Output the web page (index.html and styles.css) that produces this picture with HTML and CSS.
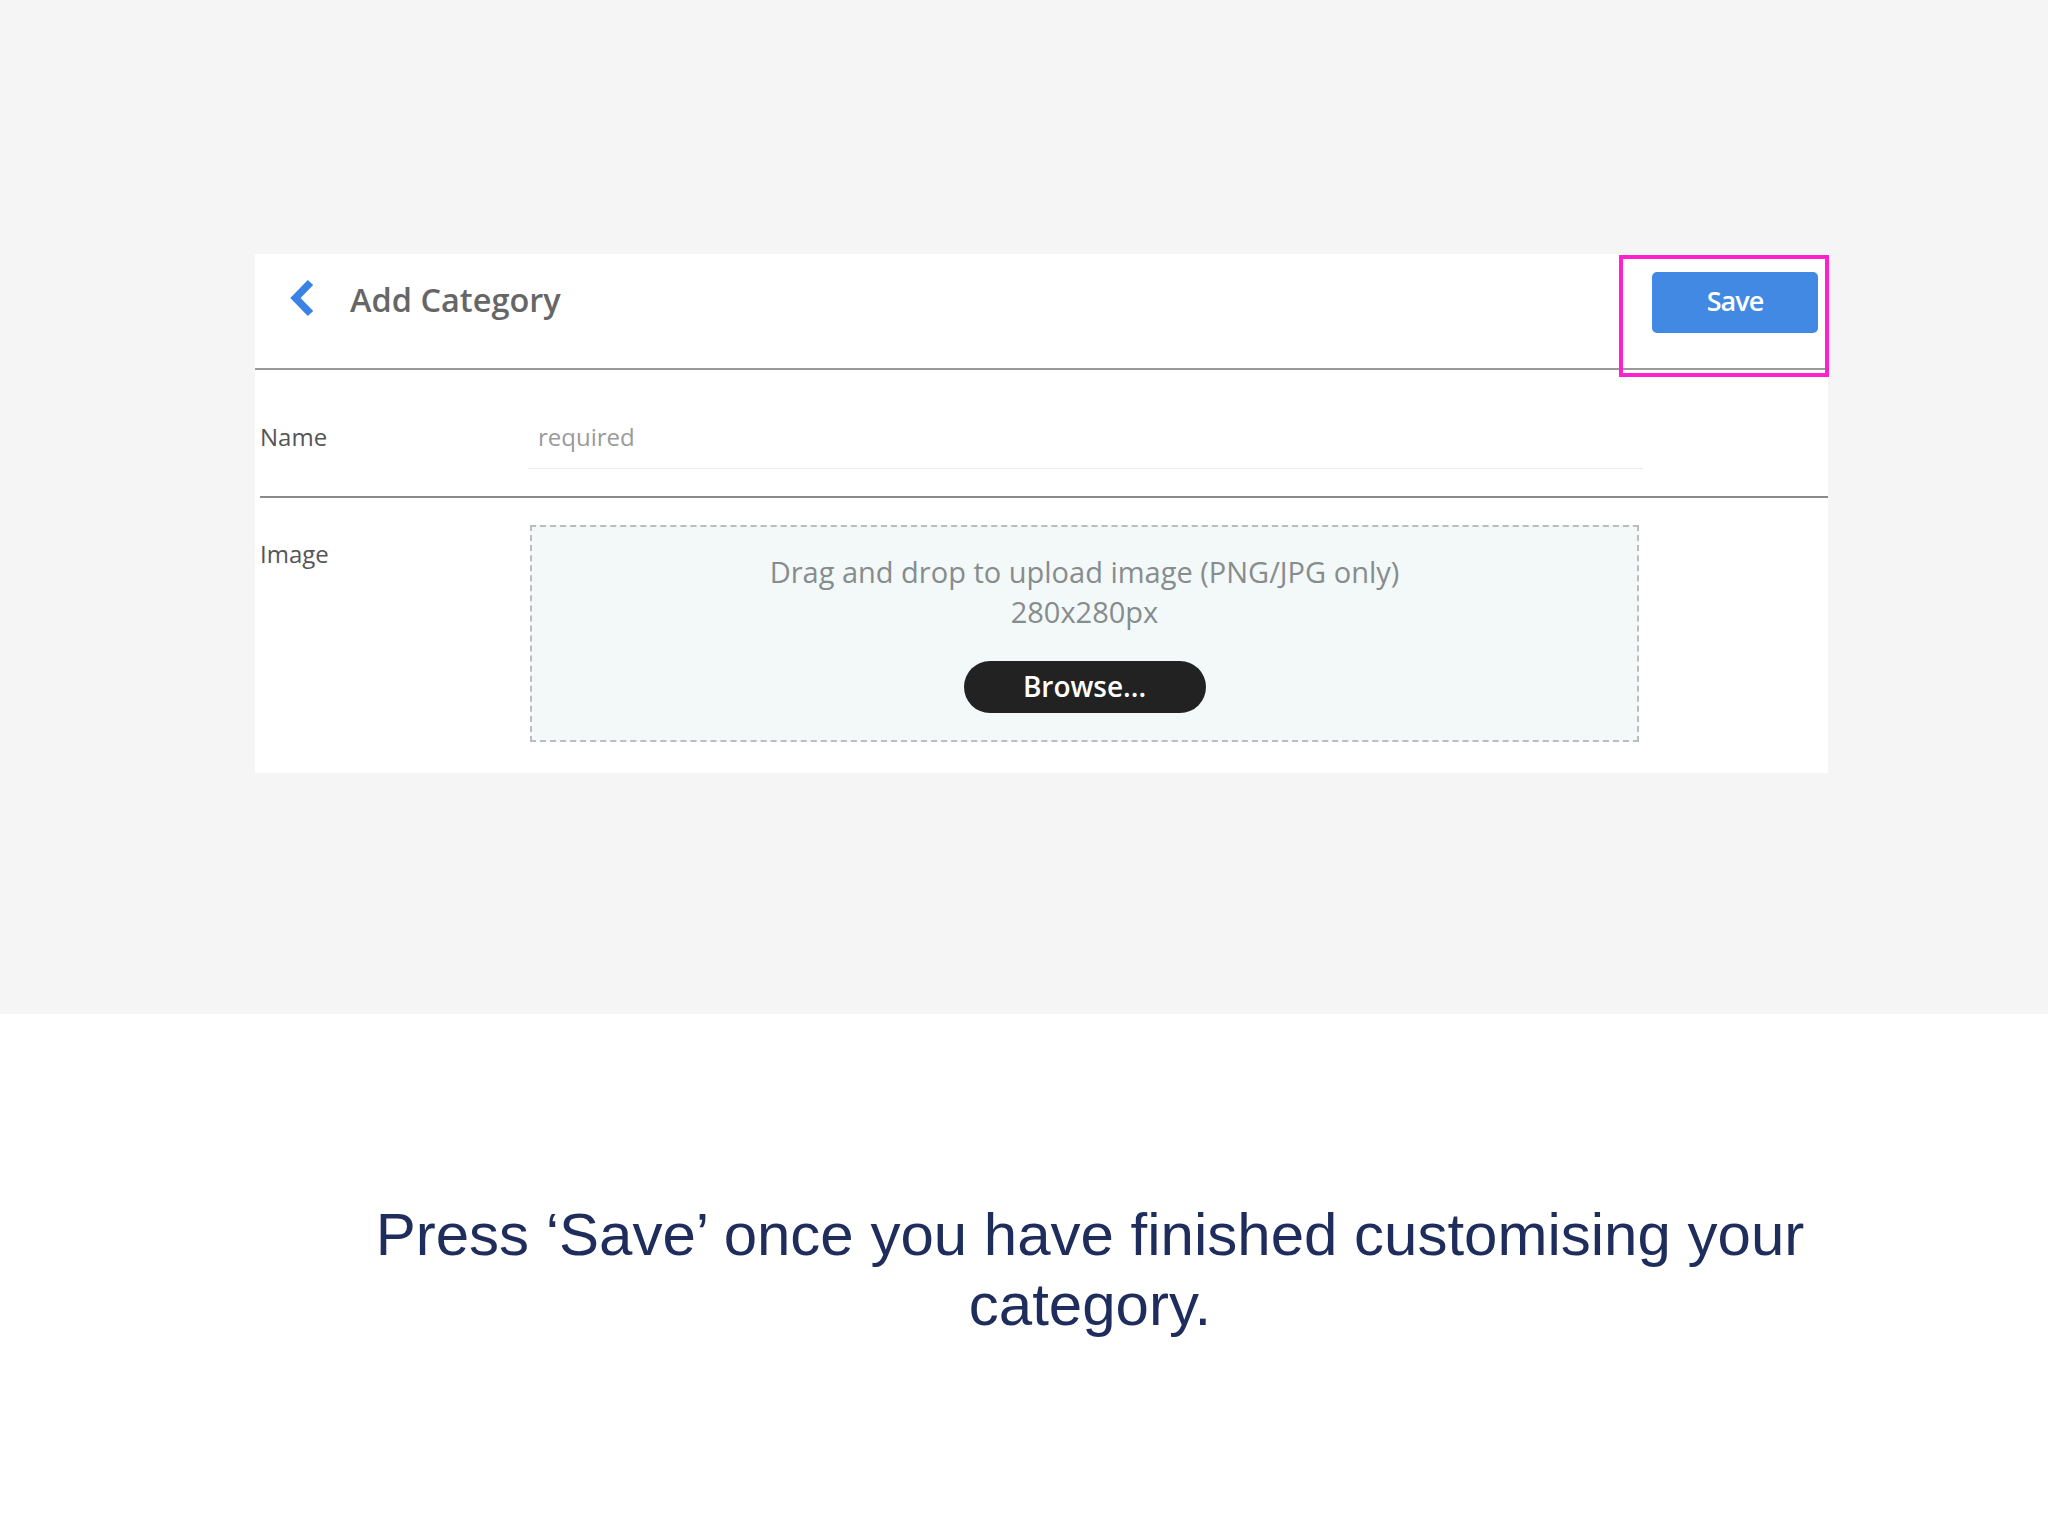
FILE: index.html
```html
<!DOCTYPE html>
<html lang="en">
<head>
<meta charset="utf-8">
<title>Add Category</title>
<link rel="stylesheet" href="styles.css">
</head>
<body>
<section class="stage">
  <div class="card">
    <header class="card-header">
      <svg class="back" width="26" height="40" viewBox="0 0 26 40" aria-hidden="true">
        <path d="M21.5 4.5 L6.5 20 L21.5 35.5" fill="none" stroke="#3a82e6" stroke-width="7.5" stroke-linejoin="miter" stroke-linecap="butt"/>
      </svg>
      <h1 class="title">Add Category</h1>
      <button class="save">Save</button>
      <div class="highlight"></div>
    </header>
    <div class="row row-name">
      <div class="label">Name</div>
      <div class="input"><span class="placeholder">required</span></div>
    </div>
    <div class="row row-image">
      <div class="label label-image">Image</div>
      <div class="dropzone">
        <p class="drop-text">Drag and drop to upload image (PNG/JPG only)<br>280x280px</p>
        <button class="browse">Browse...</button>
      </div>
    </div>
  </div>
</section>
<section class="caption">
  <p class="caption-text">Press ‘Save’ once you have finished customising your category.</p>
</section>
</body>
</html>
```
FILE: styles.css
```css
* { box-sizing: border-box; }
html, body { margin: 0; padding: 0; }
body {
  width: 2048px;
  height: 1536px;
  background: #ffffff;
  font-family: "Open Sans", "Liberation Sans", sans-serif;
  overflow: hidden;
}
.stage {
  height: 1014px;
  background: #f5f5f5;
  padding: 254px 0 0 255px;
}
.card {
  width: 1573px;
  height: 519px;
  background: #ffffff;
}
.card-header {
  position: relative;
  height: 116px;
  border-bottom: 2px solid #9a9a9a;
  display: flex;
  align-items: flex-start;
  padding: 18px 10px 0 34px;
}
.back {
  display: block;
  margin-top: 6px;
  flex: none;
}
.title {
  margin: 8px 0 0 35px;
  font-size: 32.5px;
  line-height: 40px;
  font-weight: 600;
  color: #666666;
  flex: 1;
}
.save {
  width: 166px;
  height: 61px;
  border: none;
  border-radius: 5px;
  background: #4189e2;
  color: #ffffff;
  font-family: "Open Sans", sans-serif;
  font-weight: 600;
  font-size: 27px;
  letter-spacing: -1px;
  padding: 0 0 4px 0;
  flex: none;
}
.highlight {
  position: absolute;
  left: 1364px;
  top: 1px;
  width: 210px;
  height: 122px;
  border: 4px solid #ff20cf;
  pointer-events: none;
}
.row {
  display: flex;
  align-items: flex-start;
  margin-left: 5px;
}
.label {
  width: 268px;
  flex: none;
  font-size: 24px;
  line-height: 30px;
  color: #555555;
}
.row-name {
  height: 128px;
  padding-top: 52px;
  border-bottom: 2px solid #8a8a8a;
}
.input {
  width: 1115px;
  height: 47px;
  border-bottom: 1px solid #ececec;
  padding-left: 10px;
}
.placeholder {
  font-size: 24px;
  line-height: 30px;
  color: #9a9a9a;
}
.row-image {
  padding-top: 27px;
}
.label-image {
  margin-top: 14px;
}
.dropzone {
  margin-left: 2px;
  width: 1109px;
  height: 217px;
  background: #f3f8f9;
  border: 2px dashed #bdbdbd;
  padding-top: 25px;
  display: flex;
  flex-direction: column;
  align-items: center;
}
.drop-text {
  margin: 0;
  text-align: center;
  font-size: 29px;
  line-height: 40px;
  color: #878c8d;
}
.browse {
  margin-top: 29px;
  width: 242px;
  height: 52px;
  border: none;
  border-radius: 26px;
  background: #222222;
  color: #ffffff;
  font-family: "Open Sans", sans-serif;
  font-weight: 600;
  font-size: 28px;
  padding: 0 0 3px 0;
}
.caption {
  padding-top: 186px;
}
.caption-text {
  margin: 0 0 0 310px;
  width: 1560px;
  text-align: center;
  font-family: "Liberation Sans", Arial, sans-serif;
  font-size: 60px;
  line-height: 70px;
  color: #1e2d5c;
}
```
